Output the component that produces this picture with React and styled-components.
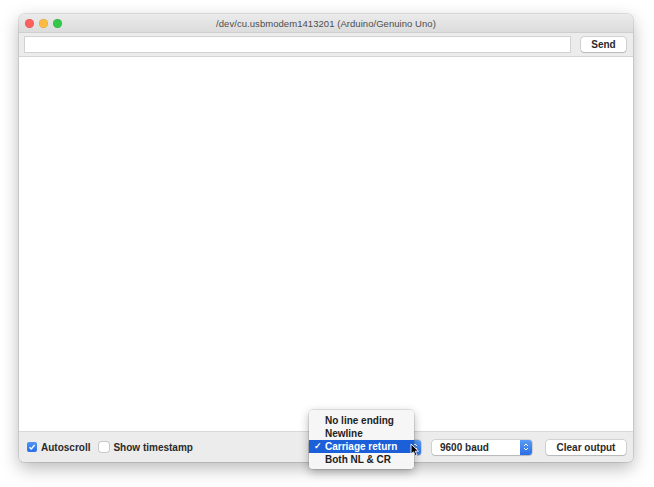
import React from "react";
import styled, { createGlobalStyle } from "styled-components";

const Global = createGlobalStyle`
  html, body { margin: 0; padding: 0; background: #ffffff; }
  body { font-family: "Liberation Sans", Arial, sans-serif; width: 654px; height: 487px; overflow: hidden; }
`;

const Window = styled.div`
  margin: 14px 0 0 19px;
  width: 614px;
  height: 448px;
  display: flex;
  flex-direction: column;
  border-radius: 5px;
  background: #ececec;
  box-shadow: 0 6px 18px rgba(0, 0, 0, 0.28), 0 0 0 0.5px rgba(0, 0, 0, 0.2);
  position: relative;
`;

const TitleBar = styled.div`
  height: 18px;
  display: flex;
  align-items: center;
  position: relative;
  background: linear-gradient(#ebebeb, #dcdcdc);
  border-radius: 5px 5px 0 0;
  border-bottom: 1px solid #cfcfcf;
`;

const Lights = styled.div`
  display: flex;
  gap: 5px;
  padding-left: 6px;
`;

const Light = styled.span`
  width: 9px;
  height: 9px;
  border-radius: 50%;
  background: ${(p) => p.$c};
  box-shadow: inset 0 0 0 0.5px rgba(0, 0, 0, 0.15);
`;

const Title = styled.div`
  position: absolute;
  left: 0;
  right: 0;
  text-align: center;
  font-size: 9.5px;
  color: #4d4d4d;
  letter-spacing: 0.05px;
`;

const InputRow = styled.div`
  height: 23px;
  display: flex;
  align-items: center;
  gap: 10px;
  padding: 0 7px 0 5px;
  background: #ececec;
  border-bottom: 1px solid #d4d4d4;
`;

const TextInput = styled.div`
  flex: 1;
  height: 15px;
  background: #fff;
  border: 1px solid #d2d2d2;
`;

const Button = styled.div`
  height: 15px;
  width: ${(p) => p.$w}px;
  box-sizing: border-box;
  display: flex;
  align-items: center;
  justify-content: center;
  background: #fff;
  border-radius: 3px;
  box-shadow: 0 0 0 0.5px rgba(0, 0, 0, 0.22), 0 1px 1px rgba(0, 0, 0, 0.12);
  font-size: 10px;
  font-weight: 600;
  color: #2a2a2a;
`;

const Output = styled.div`
  flex: 1;
  background: #ffffff;
`;

const BottomBar = styled.div`
  height: 30px;
  display: flex;
  align-items: center;
  justify-content: space-between;
  padding: 0 7px 0 8px;
  border-top: 1px solid #d8d8d8;
  border-radius: 0 0 5px 5px;
  background: #ececec;
`;

const Group = styled.div`
  display: flex;
  align-items: center;
`;

const CheckBox = styled.span`
  width: 10px;
  height: 10px;
  border-radius: 2px;
  display: inline-flex;
  align-items: center;
  justify-content: center;
  background: ${(p) => (p.$on ? "linear-gradient(#4f94f5, #2a6fe8)" : "#ffffff")};
  box-shadow: ${(p) => (p.$on ? "none" : "0 0 0 0.5px rgba(0,0,0,0.3)")};
  margin-right: 4px;
`;

const Label = styled.span`
  font-size: 10px;
  font-weight: 600;
  color: #2a2a2a;
  margin-right: ${(p) => p.$mr || 0}px;
`;

const Select = styled.div`
  position: relative;
  width: ${(p) => p.$w}px;
  height: 15px;
  box-sizing: border-box;
  display: flex;
  align-items: center;
  background: #fff;
  border-radius: 3px;
  box-shadow: 0 0 0 0.5px rgba(0, 0, 0, 0.22), 0 1px 1px rgba(0, 0, 0, 0.12);
  margin-right: ${(p) => p.$mr || 0}px;
  font-size: 10px;
  font-weight: 600;
  color: #2a2a2a;
  padding-left: 8px;
`;

const Stepper = styled.span`
  position: absolute;
  right: 0;
  top: 0;
  bottom: 0;
  width: 12px;
  border-radius: 0 3px 3px 0;
  background: linear-gradient(#5a9cf6, #2b6ee6);
  display: flex;
  align-items: center;
  justify-content: center;
`;

const Menu = styled.div`
  position: absolute;
  left: 0;
  bottom: -14px;
  width: 105px;
  padding: 4px 0 3px;
  background: rgba(246, 246, 246, 0.98);
  border-radius: 4px;
  box-shadow: 0 3px 10px rgba(0, 0, 0, 0.3), 0 0 0 0.5px rgba(0, 0, 0, 0.18);
  z-index: 2;
`;

const MenuItem = styled.div`
  height: 13px;
  display: flex;
  align-items: center;
  padding-left: 16px;
  position: relative;
  font-size: 10px;
  font-weight: 600;
  color: ${(p) => (p.$sel ? "#ffffff" : "#222")};
  background: ${(p) => (p.$sel ? "#1b5fd9" : "transparent")};
`;

const Check = styled.span`
  position: absolute;
  left: 5px;
  font-size: 9px;
`;

const Cursor = styled.svg`
  position: absolute;
  left: 101px;
  top: 3px;
  z-index: 3;
`;

const StepperIcon = () => (
  <svg width="6" height="10" viewBox="0 0 6 10">
    <path d="M1 4 L3 2 L5 4" fill="none" stroke="#fff" strokeWidth="1" />
    <path d="M1 6 L3 8 L5 6" fill="none" stroke="#fff" strokeWidth="1" />
  </svg>
);

export default function App() {
  return (
    <>
      <Global />
      <Window>
        <TitleBar>
          <Lights>
            <Light $c="#fc605c" />
            <Light $c="#fdbc40" />
            <Light $c="#34c84a" />
          </Lights>
          <Title>/dev/cu.usbmodem1413201 (Arduino/Genuino Uno)</Title>
        </TitleBar>
        <InputRow>
          <TextInput />
          <Button $w={45}>Send</Button>
        </InputRow>
        <Output />
        <BottomBar>
          <Group>
            <CheckBox $on>
              <svg width="8" height="8" viewBox="0 0 8 8">
                <path d="M1.5 4.2 L3.3 6 L6.6 2" fill="none" stroke="#fff" strokeWidth="1.3" />
              </svg>
            </CheckBox>
            <Label $mr={9}>Autoscroll</Label>
            <CheckBox />
            <Label>Show timestamp</Label>
          </Group>
          <Group>
            <Select $w={112} $mr={11}>
              <Stepper>
                <StepperIcon />
              </Stepper>
              <Menu>
                <MenuItem>No line ending</MenuItem>
                <MenuItem>Newline</MenuItem>
                <MenuItem $sel>
                  <Check>✓</Check>Carriage return
                </MenuItem>
                <MenuItem>Both NL &amp; CR</MenuItem>
              </Menu>
              <Cursor width="10" height="14" viewBox="0 0 10 14">
                <path d="M1 1 L1 11 L3.5 8.8 L5.3 12.8 L7 12 L5.3 8.2 L8.5 8.2 Z" fill="#000" stroke="#fff" strokeWidth="0.9" />
              </Cursor>
            </Select>
            <Select $w={100} $mr={14}>
              9600 baud
              <Stepper>
                <StepperIcon />
              </Stepper>
            </Select>
            <Button $w={80}>Clear output</Button>
          </Group>
        </BottomBar>
      </Window>
    </>
  );
}
